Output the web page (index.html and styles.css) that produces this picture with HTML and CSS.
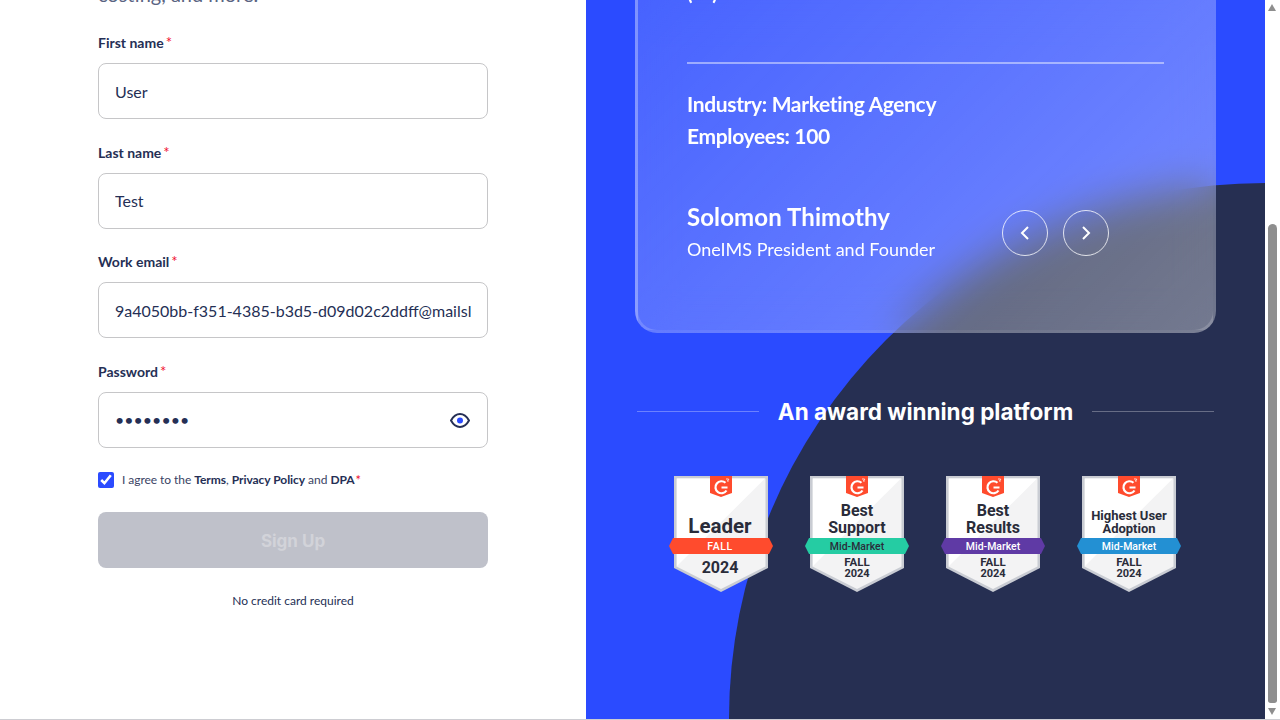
FILE: index.html
```html
<!DOCTYPE html>
<html lang="en">
<head>
<meta charset="utf-8">
<title>Sign up</title>
<link rel="stylesheet" href="styles.css">
</head>
<body>
<div class="page">
  <main class="left">
    <p class="intro">costing, and more.</p>
    <form class="form">
      <div class="field"><label class="label">First name<span class="req">*</span></label><input class="input" value="User"></div>
      <div class="field"><label class="label">Last name<span class="req">*</span></label><input class="input" value="Test"></div>
      <div class="field"><label class="label">Work email<span class="req">*</span></label><input class="input" value="9a4050bb-f351-4385-b3d5-d09d02c2ddff@mailslurp.com"></div>
      <div class="field"><label class="label">Password<span class="req">*</span></label>
        <div class="pw"><input class="input" type="password" value="password">
          <svg class="eye" viewBox="0 0 20 15" width="20" height="15"><path d="M1 7.500C3.500 3 6.500 1 10 1s6.500 2 9 6.500c-2.500 4.500-5.500 6.500-9 6.500s-6.500-2-9-6.500z" fill="none" stroke="#252f55" stroke-width="2"/><circle cx="10" cy="7.500" r="3" fill="#2b4bff"/></svg>
        </div>
      </div>
      <label class="agree"><input class="check" type="checkbox" checked><span class="agree-text">I agree to the <b>Terms</b>, <b>Privacy Policy</b> and <b>DPA</b><span class="req">*</span></span></label>
      <button class="submit" type="button" disabled>Sign Up</button>
      <p class="note">No credit card required</p>
    </form>
  </main>
  <aside class="right">
    <div class="blob"></div>
    <section class="card">
      <p class="quote">(AI)</p>
      <hr class="rule">
      <p class="facts">Industry: Marketing Agency<br>Employees: 100</p>
      <div class="person">
        <div class="who">
          <h3 class="name">Solomon Thimothy</h3>
          <p class="role">OneIMS President and Founder</p>
        </div>
        <div class="nav">
          <span class="round"><svg viewBox="0 0 12 16" width="12" height="16"><path d="M9 2 3 8l6 6" fill="none" stroke="#fff" stroke-width="2"/></svg></span>
          <span class="round"><svg viewBox="0 0 12 16" width="12" height="16"><path d="m3 2 6 6-6 6" fill="none" stroke="#fff" stroke-width="2"/></svg></span>
        </div>
      </div>
    </section>
    <div class="award"><span class="line"></span><h2 class="award-title">An award winning platform</h2><span class="line"></span></div>
    <div class="badges">
      <svg class="badge" viewBox="0 0 104 118" width="104" height="118">
        <use href="#shield"/>
        <text x="51" y="57" class="t" font-size="20.500">Leader</text>
        <path d="M4 62H100L104 70 100 78H4L0 70z" fill="#ff4b2d"/>
        <text x="51" y="74" class="t m w" font-size="10.500">FALL</text>
        <text x="51" y="97" class="t" font-size="16">2024</text>
      </svg>
      <svg class="badge" viewBox="0 0 104 118" width="104" height="118">
        <use href="#shield"/>
        <text x="52" y="40" class="t" font-size="16">Best</text>
        <text x="52" y="57" class="t" font-size="16">Support</text>
        <path d="M4 62H100L104 70 100 78H4L0 70z" fill="#25cca3"/>
        <text x="52" y="74" class="t n" font-size="10.500">Mid-Market</text>
        <text x="52" y="90" class="t" font-size="11.500">FALL</text>
        <text x="52" y="101" class="t" font-size="11">2024</text>
      </svg>
      <svg class="badge" viewBox="0 0 104 118" width="104" height="118">
        <use href="#shield"/>
        <text x="52" y="40" class="t" font-size="16">Best</text>
        <text x="52" y="57" class="t" font-size="16">Results</text>
        <path d="M4 62H100L104 70 100 78H4L0 70z" fill="#5f3aa5"/>
        <text x="52" y="74" class="t n w" font-size="10.500">Mid-Market</text>
        <text x="52" y="90" class="t" font-size="11.500">FALL</text>
        <text x="52" y="101" class="t" font-size="11">2024</text>
      </svg>
      <svg class="badge" viewBox="0 0 104 118" width="104" height="118">
        <use href="#shield"/>
        <text x="52" y="44" class="t" font-size="13">Highest User</text>
        <text x="52" y="57" class="t" font-size="13">Adoption</text>
        <path d="M4 62H100L104 70 100 78H4L0 70z" fill="#2390d3"/>
        <text x="52" y="74" class="t n w" font-size="10.500">Mid-Market</text>
        <text x="52" y="90" class="t" font-size="11.500">FALL</text>
        <text x="52" y="101" class="t" font-size="11">2024</text>
      </svg>
    </div>
  </aside>
  <div class="scrollbar">
    <span class="arrow up"></span>
    <span class="thumb"></span>
    <span class="arrow down"></span>
  </div>
</div>
<svg class="defs" width="0" height="0" aria-hidden="true">
  <defs>
    <g id="shield">
      <path d="M5 0H99V92L52 116 5 92z" fill="#c9ccd3"/>
      <path d="M7.500 2.500H96.500V90.500L52 113 7.500 90.500z" fill="#f3f3f4"/>
      <path d="M8 2.500H96L8 90z" fill="#fff"/>
      <path d="M41 0H63V17L52 21 41 17z" fill="#ff4b2d"/>
      <path d="M56.500 6.800A6 6 0 1 0 57.500 14.500M52.500 11.500h6" fill="none" stroke="#fff" stroke-width="2.200"/>
      <path d="M57 3h2.600v.8l-1.400 1.200h1.600" fill="none" stroke="#fff" stroke-width=".8"/>
    </g>
  </defs>
</svg>
</body>
</html>
```

FILE: styles.css
```css
* { box-sizing: border-box; }
html, body { margin: 0; height: 100%; overflow: hidden; background: #fff; }
body { font-family: Lato, "Liberation Sans", sans-serif; color: #252f55; }
.page { display: flex; width: 1280px; height: 720px; overflow: hidden; border-bottom: 1px solid rgba(200,200,205,.9); }
.left { width: 586px; flex: none; padding-left: 98px; }
.intro { margin: -18px 0 0; height: 50px; font-size: 20px; line-height: 24px; color: #5a6482; }
.form { width: 390px; }
.field { height: 109.500px; }
.label { display: block; height: 31px; font-size: 14px; font-weight: 700; line-height: 20px; }
.req { color: #f0102f; margin-left: 2px; font-size: 15px; font-weight: 400; position: relative; top: 0; }
.input { display: block; width: 390px; height: 56px; padding: 0 16px; border: 1px solid #c6c6c8; border-radius: 8px; font: 400 16px Lato, sans-serif; color: #252f55; background: #fff; outline: 0; }
.pw { position: relative; }
.pw .input { padding-right: 48px; }
.eye { position: absolute; right: 18px; top: 21px; }
.agree { display: flex; align-items: center; gap: 8px; margin-top: -7px; height: 34px; font-size: 12px; letter-spacing: -0.05px; color: #3a4364; }
.agree-text { margin-top: -2px; }
.agree .req { margin-left: 1px; font-size: 13px; top: 1px; }
.agree b { font-weight: 700; color: #252f55; }
.check { width: 16px; height: 16px; margin: 0; accent-color: #2b4bff; }
.submit { display: block; width: 390px; height: 56px; margin-top: 15px; padding: 2px 0 0; border: 0; border-radius: 8px; background: #bfc1ca; color: #d2d3d9; font: 700 17px Inter, sans-serif; }
.note { margin: 25px 0 0; text-align: center; font-size: 12px; line-height: 16px; color: #252f55; }

.right { position: relative; width: 679px; flex: none; background: #2b4bff; overflow: hidden; }
.blob { position: absolute; left: 143px; top: 183px; width: 1072px; height: 1072px; border-radius: 50%; background: #262f52; }
.card { position: relative; width: 581px; height: 361px; margin: -28px 0 0 49px; padding: 0 49px; border: 3px solid rgba(255,255,255,.16); border-top: 0; border-radius: 0 0 22px 22px; background: linear-gradient(135deg, rgba(255,255,255,.13), rgba(255,255,255,.36)); backdrop-filter: blur(22px); color: #fff; }
.quote { margin: 0; height: 30px; padding-top: 8px; font-size: 20px; line-height: 24px; font-weight: 700; }
.rule { height: 2px; margin: 60px 0 0 0; border: 0; background: rgba(255,255,255,.45); }
.facts { margin: 24px 0 0; font-size: 21px; line-height: 32px; font-weight: 700; letter-spacing: -0.35px; }
.person { display: flex; align-items: center; margin-top: 49px; }
.who { width: 315px; }
.name { margin: 0; font-size: 24px; line-height: 32px; font-weight: 700; letter-spacing: 0.1px; }
.role { margin: 0; font-size: 18px; line-height: 32px; }
.nav { display: flex; gap: 15px; }
.round { display: flex; align-items: center; justify-content: center; width: 46px; height: 46px; border: 1.500px solid rgba(255,255,255,.8); border-radius: 50%; }
.award { position: relative; display: flex; align-items: center; justify-content: space-between; width: 577px; margin: 64px 0 0 51px; }
.line { width: 122px; height: 1px; margin-bottom: 2px; background: rgba(255,255,255,.3); }
.award-title { margin: 0; font: 700 22.500px Inter, sans-serif; line-height: 30px; color: #fff; }
.badges { position: relative; display: flex; gap: 32.100px; margin: 49px 0 0 83px; }
.badge { flex: none; display: block; }
.t { font-family: Roboto, sans-serif; font-weight: 700; fill: #2a2c3a; text-anchor: middle; }
.m { font-weight: 500; letter-spacing: .6px; }
.n { font-weight: 500; }
.w { fill: #fff; }
.scrollbar { flex: none; width: 15px; background: #fff; position: relative; }
.thumb { position: absolute; left: 3px; top: 224px; width: 9px; height: 479px; border-radius: 5px 5px 3px 3px; background: #8e8e8e; }
.arrow { position: absolute; left: 3px; width: 0; height: 0; border: 4.500px solid transparent; }
.up { top: 0; border-top: 0; border-bottom: 7px solid #8e8e8e; margin-top: 4px; }
.down { bottom: 0; border-bottom: 0; border-top: 7px solid #8e8e8e; margin-bottom: 4px; }
.defs { position: absolute; }
```
